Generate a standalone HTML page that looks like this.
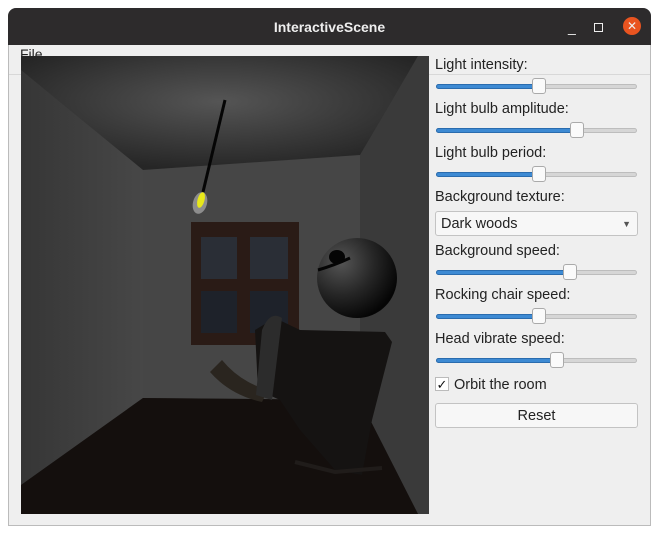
<!DOCTYPE html>
<html><head><style>
body{margin:0;width:660px;height:535px;background:#fff;font-family:"Liberation Sans","DejaVu Sans",sans-serif;position:relative;overflow:hidden}
.win{position:absolute;left:8px;top:8px;width:643px;height:518px;background:#efefef;border:1px solid #bbb;border-top:none;border-radius:8px 8px 0 0;box-sizing:border-box}
.tb{position:absolute;left:8px;top:8px;width:643px;height:37px;background:#2d2b2c;border-radius:8px 8px 0 0;color:#eee;font-weight:bold;font-size:14px;text-align:center;line-height:38px}
.lbl{position:absolute;left:435px;font-size:14.5px;color:#222}
.sl{position:absolute;left:436px;width:201px;height:5px;background:#d6d6d6;border:1px solid #bdbdbd;border-radius:3px;box-sizing:border-box}
.sl i{position:absolute;left:-1px;top:-1px;height:5px;background:#3d8ad3;border:1px solid #2a6cae;border-radius:3px;box-sizing:border-box}
.sl b{position:absolute;top:-7px;width:14px;height:16px;background:#fafafa;border:1px solid #aaa;border-radius:3px;box-sizing:border-box}
.btn{position:absolute;left:435px;width:203px;background:#f7f7f7;border:1px solid #c3c3c3;border-radius:3px;box-sizing:border-box;font-size:14.5px;color:#222}
</style></head><body>
<div class="win"></div>
<div class="tb">InteractiveScene
<span style="position:absolute;left:560px;top:0;font-weight:normal">_</span>
<span style="position:absolute;left:586px;top:15px;width:7px;height:7px;border:1.5px solid #eee"></span>
<span style="position:absolute;left:615px;top:9px;width:18px;height:18px;border-radius:50%;background:#e95420;line-height:18px;font-size:12px;font-weight:normal">✕</span>
</div>
<div style="position:absolute;left:20px;top:46px;font-size:14px;color:#222">File</div>
<div style="position:absolute;left:9px;top:74px;width:641px;height:1px;background:#d8d8d8"></div>
<svg style="position:absolute;left:21px;top:56px" width="408" height="458" viewBox="21 56 408 458">
<defs>
<radialGradient id="c" cx="0.5" cy="0.4" r="0.6"><stop offset="0" stop-color="#555"/><stop offset="1" stop-color="#262626"/></radialGradient>
<linearGradient id="l" x1="0" x2="1"><stop offset="0" stop-color="#363636"/><stop offset="1" stop-color="#474747"/></linearGradient>
<radialGradient id="h" cx="0.3" cy="0.3" r="0.75"><stop offset="0" stop-color="#555"/><stop offset="0.55" stop-color="#262626"/><stop offset="1" stop-color="#050505"/></radialGradient>
</defs>
<rect x="21" y="56" width="408" height="458" fill="#2e2e2e"/>
<polygon points="21,56 418,56 360,155 143,170 21,70" fill="url(#c)"/>
<polygon points="21,70 143,170 143,398 21,485" fill="url(#l)"/>
<polygon points="143,170 360,155 360,400 143,398" fill="#464646"/>
<polygon points="360,155 418,56 429,56 429,514 418,514 360,400" fill="#3a3a3a"/>
<polygon points="143,398 360,400 418,514 21,514 21,485" fill="#140f0d"/>
<rect x="191" y="222" width="108" height="123" fill="#2a1b16"/>
<rect x="201" y="237" width="36" height="42" fill="#2a2e36"/><rect x="250" y="237" width="38" height="42" fill="#2a2e36"/>
<rect x="201" y="291" width="36" height="42" fill="#1e222a"/><rect x="250" y="291" width="38" height="42" fill="#1e222a"/>
<path d="M210,372 Q230,395 262,402 L268,390 Q240,382 222,360Z" fill="#2a251f"/>
<path d="M255,330 L275,318 L300,330 L385,332 L392,342 L372,420 L362,475 L335,470 L300,430 L280,400 L258,390Z" fill="#151312"/>
<path d="M262,330 Q270,310 282,318 L272,400 L256,395Z" fill="#2c2c2c"/>
<polyline points="295,462 335,472 382,468" stroke="#201c1a" stroke-width="4" fill="none"/>
<circle cx="357" cy="278" r="40" fill="url(#h)"/>
<ellipse cx="337" cy="257" rx="8" ry="7" fill="#050505"/>
<path d="M318,270 Q335,265 350,258" stroke="#050505" stroke-width="3" fill="none"/>
<line x1="225" y1="100" x2="203" y2="192" stroke="#050505" stroke-width="3"/>
<ellipse cx="200" cy="203" rx="7" ry="11" fill="#8d8d8d" transform="rotate(15 200 203)"/>
<ellipse cx="201" cy="200" rx="3.5" ry="8" fill="#e8e81a" transform="rotate(15 201 200)"/>
</svg>
<div class="lbl" style="top:57px">Light intensity:</div>
<div class="sl" style="top:84px"><i style="width:104px"></i><b style="left:95px"></b></div>
<div class="lbl" style="top:101px">Light bulb amplitude:</div>
<div class="sl" style="top:128px"><i style="width:142px"></i><b style="left:133px"></b></div>
<div class="lbl" style="top:145px">Light bulb period:</div>
<div class="sl" style="top:172px"><i style="width:104px"></i><b style="left:95px"></b></div>
<div class="lbl" style="top:189px">Background texture:</div>
<div class="btn" style="top:211px;height:25px;line-height:25px;padding-left:5px">Dark woods<span style="position:absolute;right:6px;top:0;font-size:9px;color:#555">▼</span></div>
<div class="lbl" style="top:243px">Background speed:</div>
<div class="sl" style="top:270px"><i style="width:135px"></i><b style="left:126px"></b></div>
<div class="lbl" style="top:287px">Rocking chair speed:</div>
<div class="sl" style="top:314px"><i style="width:104px"></i><b style="left:95px"></b></div>
<div class="lbl" style="top:331px">Head vibrate speed:</div>
<div class="sl" style="top:358px"><i style="width:122px"></i><b style="left:113px"></b></div>
<div style="position:absolute;left:435px;top:377px;width:14px;height:14px;border:1px solid #bbb;background:#fff;box-sizing:border-box;font-size:13px;line-height:13px;text-align:center;color:#111">✓</div>
<div class="lbl" style="top:377px;left:454px">Orbit the room</div>
<div class="btn" style="top:403px;height:25px;line-height:25px;text-align:center">Reset</div>
</body></html>
